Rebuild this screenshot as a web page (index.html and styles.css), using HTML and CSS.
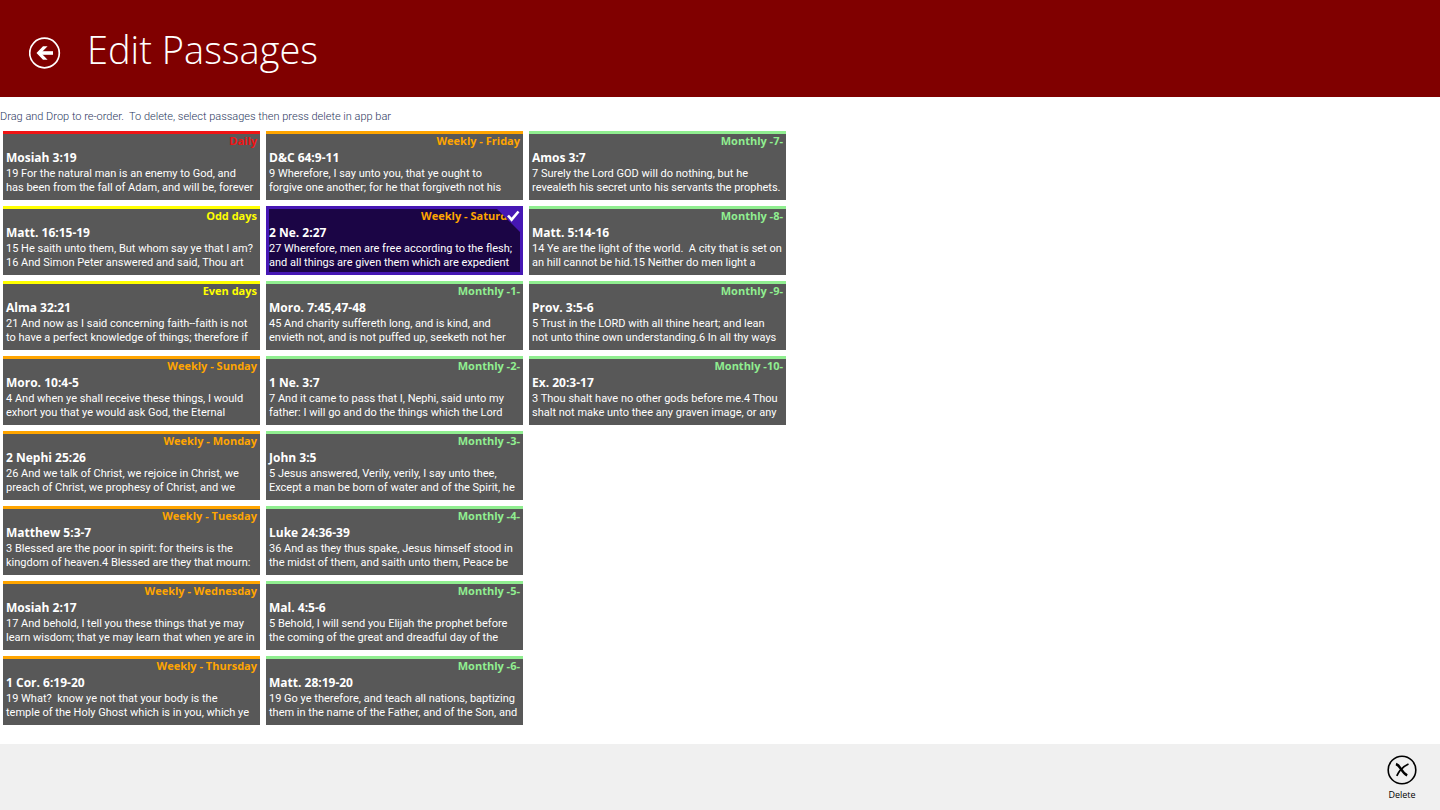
FILE: index.html
```html
<!DOCTYPE html>
<html lang="en">
<head>
<meta charset="utf-8">
<title>Edit Passages</title>
<link rel="stylesheet" href="styles.css">
</head>
<body>
<header class="header">
  <button class="back" type="button" aria-label="Back">
    <svg width="32" height="32" viewBox="0 0 32 32" fill="none" stroke="#fff"><circle cx="15.500" cy="16" r="14.8" stroke-width="1.7"/><path d="M24 16H10" stroke-width="3.600"/><path d="M7.500 16l6.500-6.800h4.600L12 16l6.600 6.800H14z" fill="#fff" stroke="none"/></svg>
  </button>
  <h1 class="title">Edit Passages</h1>
</header>
<main class="main">
  <p class="hint">Drag and Drop to re-order.&nbsp; To delete, select passages then press delete in app bar</p>
  <ul class="grid" role="listbox" aria-label="Passages" aria-multiselectable="true">
    <li class="card daily" role="option"><div class="tag">Daily</div><h2 class="ref">Mosiah 3:19</h2><p class="text">19 For the natural man is an enemy to God, and<br>has been from the fall of Adam, and will be, forever</p></li>
    <li class="card days" role="option"><div class="tag">Odd days</div><h2 class="ref">Matt. 16:15-19</h2><p class="text">15 He saith unto them, But whom say ye that I am?<br>16 And Simon Peter answered and said, Thou art</p></li>
    <li class="card days" role="option"><div class="tag">Even days</div><h2 class="ref">Alma 32:21</h2><p class="text">21 And now as I said concerning faith--faith is not<br>to have a perfect knowledge of things; therefore if</p></li>
    <li class="card weekly" role="option"><div class="tag">Weekly - Sunday</div><h2 class="ref">Moro. 10:4-5</h2><p class="text">4 And when ye shall receive these things, I would<br>exhort you that ye would ask God, the Eternal</p></li>
    <li class="card weekly" role="option"><div class="tag">Weekly - Monday</div><h2 class="ref">2 Nephi 25:26</h2><p class="text">26 And we talk of Christ, we rejoice in Christ, we<br>preach of Christ, we prophesy of Christ, and we</p></li>
    <li class="card weekly" role="option"><div class="tag">Weekly - Tuesday</div><h2 class="ref">Matthew 5:3-7</h2><p class="text">3 Blessed are the poor in spirit: for theirs is the<br>kingdom of heaven.4 Blessed are they that mourn:</p></li>
    <li class="card weekly" role="option"><div class="tag">Weekly - Wednesday</div><h2 class="ref">Mosiah 2:17</h2><p class="text">17 And behold, I tell you these things that ye may<br>learn wisdom; that ye may learn that when ye are in</p></li>
    <li class="card weekly" role="option"><div class="tag">Weekly - Thursday</div><h2 class="ref">1 Cor. 6:19-20</h2><p class="text">19 What?&nbsp; know ye not that your body is the<br>temple of the Holy Ghost which is in you, which ye</p></li>
    <li class="card weekly" role="option"><div class="tag">Weekly - Friday</div><h2 class="ref">D&amp;C 64:9-11</h2><p class="text">9 Wherefore, I say unto you, that ye ought to<br>forgive one another; for he that forgiveth not his</p></li>
    <li class="card weekly selected" role="option" aria-selected="true"><div class="tag">Weekly - Saturday</div><h2 class="ref">2 Ne. 2:27</h2><p class="text">27 Wherefore, men are free according to the flesh;<br>and all things are given them which are expedient</p><svg class="check" width="29" height="29" viewBox="0 0 29 29" fill="none"><path d="M0 0h29v29z" fill="#4617b4"/><path d="M14 9.500l3.600 4.200L24.500 5.500" stroke="#fff" stroke-width="2.600"/></svg></li>
    <li class="card monthly" role="option"><div class="tag">Monthly -1-</div><h2 class="ref">Moro. 7:45,47-48</h2><p class="text">45 And charity suffereth long, and is kind, and<br>envieth not, and is not puffed up, seeketh not her</p></li>
    <li class="card monthly" role="option"><div class="tag">Monthly -2-</div><h2 class="ref">1 Ne. 3:7</h2><p class="text">7 And it came to pass that I, Nephi, said unto my<br>father: I will go and do the things which the Lord</p></li>
    <li class="card monthly" role="option"><div class="tag">Monthly -3-</div><h2 class="ref">John 3:5</h2><p class="text">5 Jesus answered, Verily, verily, I say unto thee,<br>Except a man be born of water and of the Spirit, he</p></li>
    <li class="card monthly" role="option"><div class="tag">Monthly -4-</div><h2 class="ref">Luke 24:36-39</h2><p class="text">36 And as they thus spake, Jesus himself stood in<br>the midst of them, and saith unto them, Peace be</p></li>
    <li class="card monthly" role="option"><div class="tag">Monthly -5-</div><h2 class="ref">Mal. 4:5-6</h2><p class="text">5 Behold, I will send you Elijah the prophet before<br>the coming of the great and dreadful day of the</p></li>
    <li class="card monthly" role="option"><div class="tag">Monthly -6-</div><h2 class="ref">Matt. 28:19-20</h2><p class="text">19 Go ye therefore, and teach all nations, baptizing<br>them in the name of the Father, and of the Son, and</p></li>
    <li class="card monthly" role="option"><div class="tag">Monthly -7-</div><h2 class="ref">Amos 3:7</h2><p class="text">7 Surely the Lord GOD will do nothing, but he<br>revealeth his secret unto his servants the prophets.</p></li>
    <li class="card monthly" role="option"><div class="tag">Monthly -8-</div><h2 class="ref">Matt. 5:14-16</h2><p class="text">14 Ye are the light of the world.&nbsp; A city that is set on<br>an hill cannot be hid.15 Neither do men light a</p></li>
    <li class="card monthly" role="option"><div class="tag">Monthly -9-</div><h2 class="ref">Prov. 3:5-6</h2><p class="text">5 Trust in the LORD with all thine heart; and lean<br>not unto thine own understanding.6 In all thy ways</p></li>
    <li class="card monthly" role="option"><div class="tag">Monthly -10-</div><h2 class="ref">Ex. 20:3-17</h2><p class="text">3 Thou shalt have no other gods before me.4 Thou<br>shalt not make unto thee any graven image, or any</p></li>
  </ul>
</main>
<footer class="appbar">
  <button class="delete" type="button">
    <svg width="30" height="30" viewBox="0 0 30 30" fill="none" stroke="#000"><circle cx="15" cy="15" r="13.800" stroke-width="1.600"/><path d="M9 9c2.200 .8 3.500 2.600 4.900 4.800 1.600 2.500 3.500 5.200 6.300 6.500" stroke-width="2.400"/><path d="M21.500 9c-3.500 1.500-6.500 4-8.500 6.500-1.200 1.500-2.200 3.200-3.200 5.300" stroke-width="1.800"/></svg>
    <span>Delete</span>
  </button>
</footer>
</body>
</html>
```

FILE: styles.css
```css
* { box-sizing: border-box; }
body {
  margin: 0;
  min-height: 100vh;
  display: flex;
  flex-direction: column;
  background: #fff;
  font-family: "Open Sans", "Noto Sans", sans-serif;
}
h1, h2, p, ul { margin: 0; padding: 0; }
button { border: 0; padding: 0; background: none; font-family: inherit; cursor: pointer; }
svg { display: block; }
.header {
  display: flex;
  align-items: center;
  gap: 26px;
  height: 97px;
  padding: 0 29px;
  background: #800000;
}
.back { padding-top: 8px; }
.title {
  color: #fff;
  font-size: 38px;
  line-height: 54px;
  font-weight: 300;
}
.main { flex: 1; padding-bottom: 12px; }
.hint {
  padding: 12px 0 6px;
  font-family: Roboto, "Open Sans", sans-serif;
  font-weight: 300;
  font-size: 11px;
  line-height: 16px;
  color: #2c3860;
  white-space: nowrap;
}
.grid {
  display: grid;
  grid-auto-flow: column;
  grid-template-rows: repeat(8, auto);
  grid-auto-columns: 257px;
  justify-content: start;
  gap: 6px;
  padding: 0 3px;
  list-style: none;
}
.card {
  position: relative;
  overflow: hidden;
  height: 69px;
  padding: 0 3px;
  border-top: 3px solid currentColor;
  background: #585858;
  white-space: nowrap;
}
.daily { color: #f01414; }
.days { color: #ffff00; }
.weekly { color: #ffa500; }
.monthly { color: #90ee90; }
.tag {
  font-size: 11px;
  line-height: 14px;
  font-weight: 700;
  text-align: right;
}
.ref {
  color: #fff;
  font-size: 12px;
  line-height: 19px;
  font-weight: 700;
}
.text {
  color: #fff;
  font-family: Roboto, "Open Sans", sans-serif;
  font-size: 11px;
  line-height: 14px;
}
.selected {
  border-top-color: #4617b4;
  background: #1b0545;
  box-shadow: inset 3px 0 #4617b4, inset -3px 0 #4617b4, inset 0 -3px #4617b4;
}
.check { position: absolute; top: -3px; right: 0; }
.appbar {
  display: flex;
  justify-content: flex-end;
  height: 66px;
  padding: 11px 23px 0;
  background: #f0f0f0;
}
.delete {
  display: flex;
  flex-direction: column;
  align-items: center;
  gap: 3px;
  font-size: 9px;
  line-height: 14px;
  color: #000;
}
```
